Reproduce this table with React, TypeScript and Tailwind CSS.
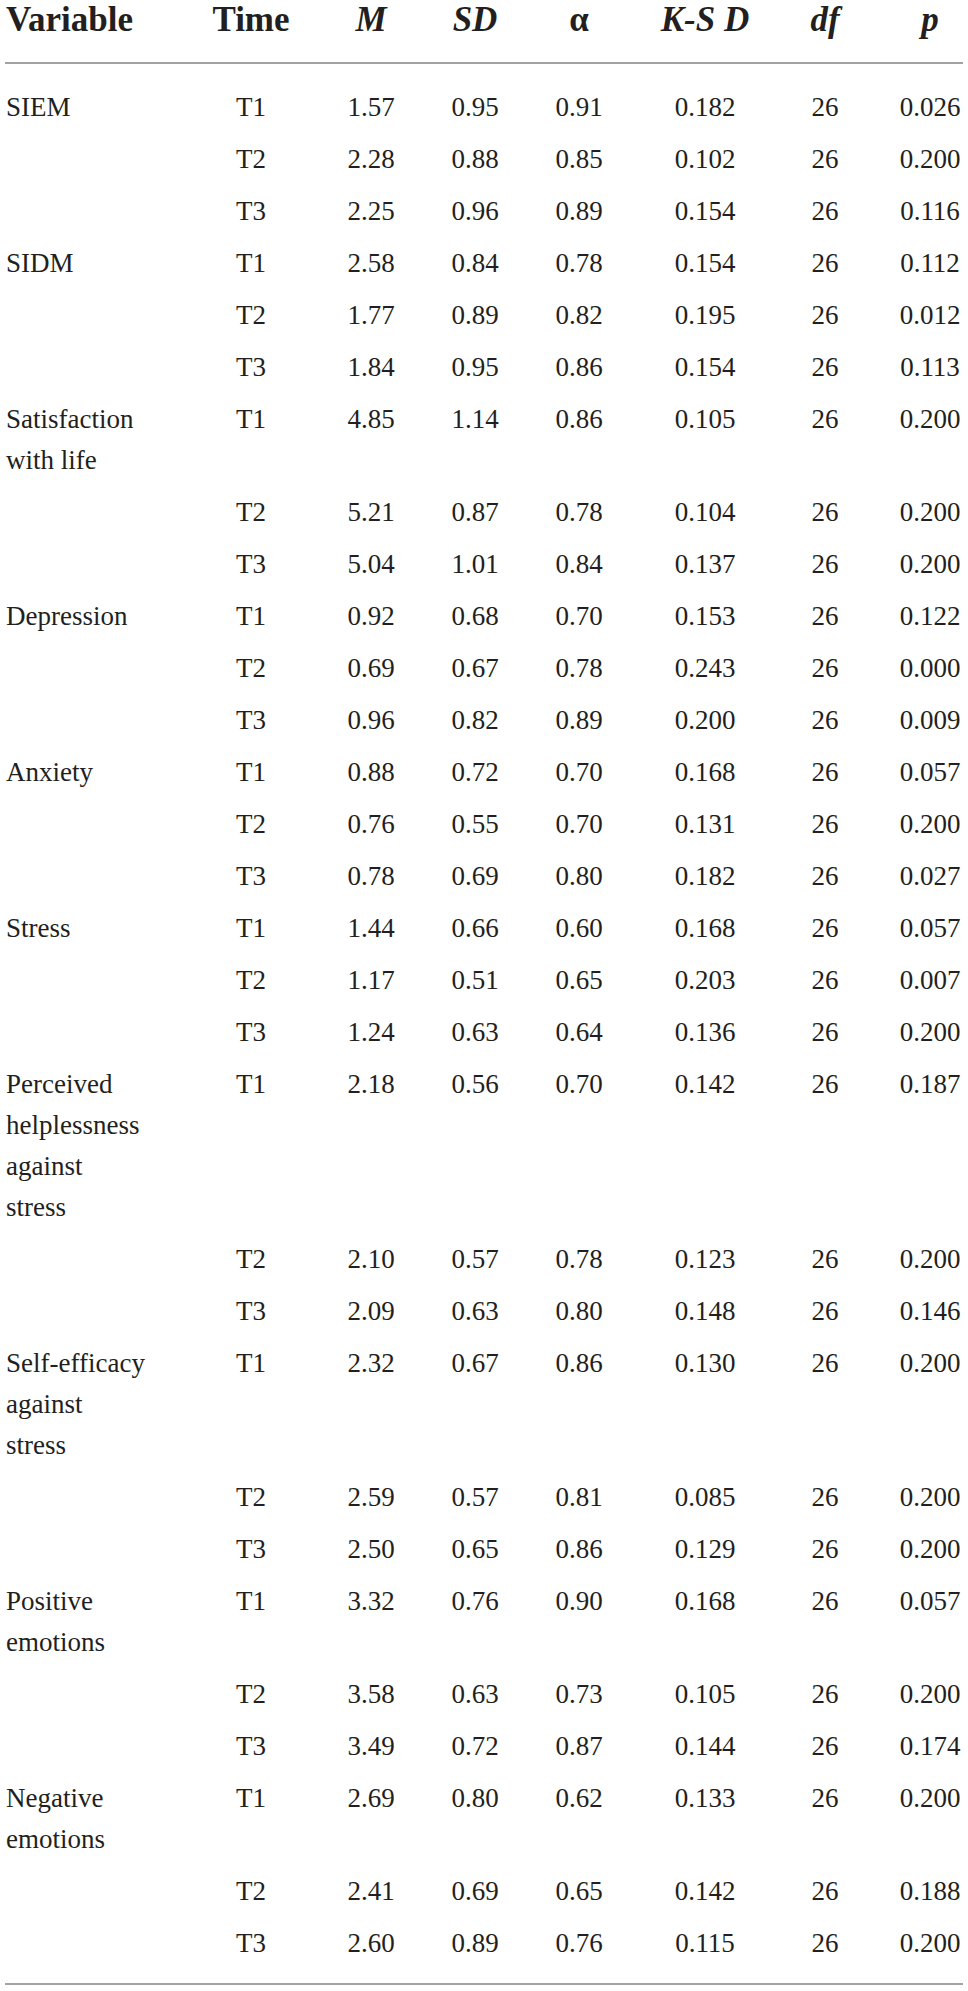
const rows: { variable: string[]; data: string[][] }[] = [
  {
    variable: ["SIEM"],
    data: [
      ["T1", "1.57", "0.95", "0.91", "0.182", "26", "0.026"],
      ["T2", "2.28", "0.88", "0.85", "0.102", "26", "0.200"],
      ["T3", "2.25", "0.96", "0.89", "0.154", "26", "0.116"],
    ],
  },
  {
    variable: ["SIDM"],
    data: [
      ["T1", "2.58", "0.84", "0.78", "0.154", "26", "0.112"],
      ["T2", "1.77", "0.89", "0.82", "0.195", "26", "0.012"],
      ["T3", "1.84", "0.95", "0.86", "0.154", "26", "0.113"],
    ],
  },
  {
    variable: ["Satisfaction", "with life"],
    data: [
      ["T1", "4.85", "1.14", "0.86", "0.105", "26", "0.200"],
      ["T2", "5.21", "0.87", "0.78", "0.104", "26", "0.200"],
      ["T3", "5.04", "1.01", "0.84", "0.137", "26", "0.200"],
    ],
  },
  {
    variable: ["Depression"],
    data: [
      ["T1", "0.92", "0.68", "0.70", "0.153", "26", "0.122"],
      ["T2", "0.69", "0.67", "0.78", "0.243", "26", "0.000"],
      ["T3", "0.96", "0.82", "0.89", "0.200", "26", "0.009"],
    ],
  },
  {
    variable: ["Anxiety"],
    data: [
      ["T1", "0.88", "0.72", "0.70", "0.168", "26", "0.057"],
      ["T2", "0.76", "0.55", "0.70", "0.131", "26", "0.200"],
      ["T3", "0.78", "0.69", "0.80", "0.182", "26", "0.027"],
    ],
  },
  {
    variable: ["Stress"],
    data: [
      ["T1", "1.44", "0.66", "0.60", "0.168", "26", "0.057"],
      ["T2", "1.17", "0.51", "0.65", "0.203", "26", "0.007"],
      ["T3", "1.24", "0.63", "0.64", "0.136", "26", "0.200"],
    ],
  },
  {
    variable: ["Perceived", "helplessness", "against", "stress"],
    data: [
      ["T1", "2.18", "0.56", "0.70", "0.142", "26", "0.187"],
      ["T2", "2.10", "0.57", "0.78", "0.123", "26", "0.200"],
      ["T3", "2.09", "0.63", "0.80", "0.148", "26", "0.146"],
    ],
  },
  {
    variable: ["Self-efficacy", "against", "stress"],
    data: [
      ["T1", "2.32", "0.67", "0.86", "0.130", "26", "0.200"],
      ["T2", "2.59", "0.57", "0.81", "0.085", "26", "0.200"],
      ["T3", "2.50", "0.65", "0.86", "0.129", "26", "0.200"],
    ],
  },
  {
    variable: ["Positive", "emotions"],
    data: [
      ["T1", "3.32", "0.76", "0.90", "0.168", "26", "0.057"],
      ["T2", "3.58", "0.63", "0.73", "0.105", "26", "0.200"],
      ["T3", "3.49", "0.72", "0.87", "0.144", "26", "0.174"],
    ],
  },
  {
    variable: ["Negative", "emotions"],
    data: [
      ["T1", "2.69", "0.80", "0.62", "0.133", "26", "0.200"],
      ["T2", "2.41", "0.69", "0.65", "0.142", "26", "0.188"],
      ["T3", "2.60", "0.89", "0.76", "0.115", "26", "0.200"],
    ],
  },
];

const grid =
  "grid grid-cols-[196px_100px_140px_68px_140px_112px_128px_82px]";

function HeaderRow() {
  return (
    <div className={`${grid} h-[62px] text-[35px] font-bold leading-[40px]`}>
      <div className="pl-[1px]">Variable</div>
      <div className="text-center">Time</div>
      <div className="text-center italic">M</div>
      <div className="text-center italic">SD</div>
      <div className="text-center">α</div>
      <div className="text-center italic">K-S D</div>
      <div className="text-center italic">df</div>
      <div className="text-center italic">p</div>
    </div>
  );
}

function DataRow({ label, cells }: { label: string[]; cells: string[] }) {
  return (
    <div className={`${grid} pt-[6px] pb-[5px] text-[27px] leading-[41px]`}>
      <div className="whitespace-nowrap pl-[1px]">
        {label.map((line) => (
          <div key={line}>{line}</div>
        ))}
      </div>
      {cells.map((value, i) => (
        <div key={i} className="whitespace-nowrap text-center">
          {value}
        </div>
      ))}
    </div>
  );
}

export default function App() {
  return (
    <div className="min-h-[1991px] w-[968px] bg-white font-['Liberation_Serif',serif] text-[#231f20]">
      <div className="ml-[5px] w-[958px]">
        <HeaderRow />
        <div className="border-y-2 border-[#a3a3a3] pt-[17px] pb-[14px]">
          {rows.map((group) =>
            group.data.map((cells, i) => (
              <DataRow
                key={group.variable[0] + cells[0]}
                label={i === 0 ? group.variable : []}
                cells={cells}
              />
            ))
          )}
        </div>
      </div>
    </div>
  );
}
